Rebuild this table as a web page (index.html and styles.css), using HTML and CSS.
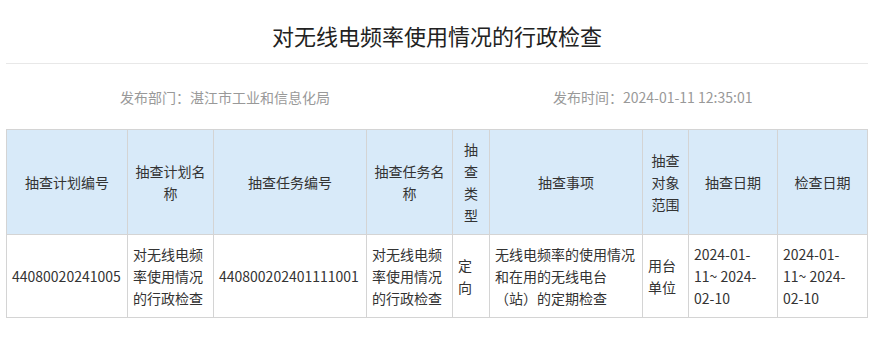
FILE: index.html
```html
<!DOCTYPE html>
<html lang="zh-CN">
<head>
<meta charset="utf-8">
<title>对无线电频率使用情况的行政检查</title>
<link rel="stylesheet" href="styles.css">
</head>
<body>
<div class="page">
  <h1 class="title">对无线电频率使用情况的行政检查</h1>
  <div class="meta">
    <span class="meta-item">发布部门：湛江市工业和信息化局</span>
    <span class="meta-item">发布时间：2024-01-11 12:35:01</span>
  </div>
  <table class="grid">
    <colgroup>
      <col class="c1"><col class="c2"><col class="c3"><col class="c4"><col class="c5"><col class="c6"><col class="c7"><col class="c8"><col class="c9">
    </colgroup>
    <thead>
      <tr>
        <th>抽查计划编号</th>
        <th>抽查计划名称</th>
        <th>抽查任务编号</th>
        <th>抽查任务名称</th>
        <th>抽查类型</th>
        <th>抽查事项</th>
        <th>抽查对象范围</th>
        <th>抽查日期</th>
        <th>检查日期</th>
      </tr>
    </thead>
    <tbody>
      <tr>
        <td>44080020241005</td>
        <td>对无线电频率使用情况的行政检查</td>
        <td>440800202401111001</td>
        <td>对无线电频率使用情况的行政检查</td>
        <td>定向</td>
        <td>无线电频率的使用情况和在用的无线电台（站）的定期检查</td>
        <td>用台单位</td>
        <td>2024-01-<wbr>11~ 2024-<wbr>02-10</td>
        <td>2024-01-<wbr>11~ 2024-<wbr>02-10</td>
      </tr>
    </tbody>
  </table>
</div>
</body>
</html>
```
FILE: styles.css
```css
html, body {
  margin: 0;
  padding: 0;
  background: #ffffff;
}
body {
  font-family: "Noto Sans CJK SC", "Microsoft YaHei", sans-serif;
  color: #333333;
}
.page {
  padding: 0 7px 0 6px;
}
.title {
  margin: 0;
  padding: 20px 0 13px;
  font-size: 22px;
  line-height: 30px;
  font-weight: normal;
  color: #222222;
  text-align: center;
  border-bottom: 1px solid #e8e8e8;
}
.meta {
  display: flex;
  gap: 223px;
  padding-left: 114px;
  margin-top: 23px;
  font-size: 14px;
  line-height: 20px;
  color: #999999;
}
.grid {
  margin-top: 22px;
  width: 862px;
  table-layout: fixed;
  border-collapse: collapse;
  font-size: 14px;
  line-height: 22px;
  color: #333333;
}
.grid th,
.grid td {
  border: 1px solid #d4d4d4;
  padding: 8px 5px;
  vertical-align: middle;
  word-wrap: break-word;
}
.grid th {
  background: #d8eaf9;
  font-weight: normal;
  text-align: center;
}
.grid td {
  text-align: left;
}
.c1 { width: 121px; }
.c2 { width: 86px; }
.c3 { width: 153px; }
.c4 { width: 86px; }
.c5 { width: 37px; }
.c6 { width: 153px; }
.c7 { width: 46px; }
.c8 { width: 89px; }
.c9 { width: 90px; }
```
